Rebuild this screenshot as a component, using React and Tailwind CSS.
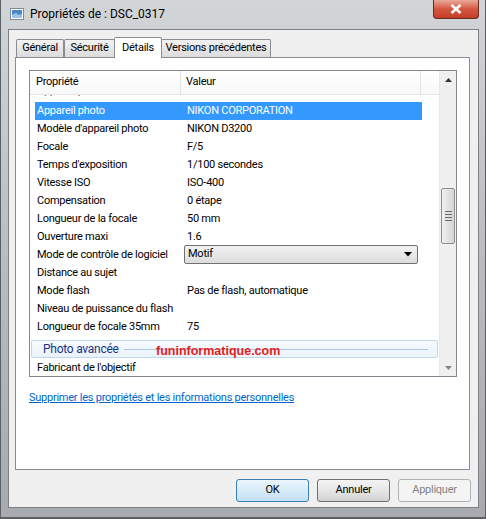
import React from 'react';

const rows = [
  ["Modèle d'appareil photo", 'NIKON D3200'],
  ['Focale', 'F/5'],
  ["Temps d'exposition", '1/100 secondes'],
  ['Vitesse ISO', 'ISO-400'],
  ['Compensation', '0 étape'],
  ['Longueur de la focale', '50 mm'],
  ['Ouverture maxi', '1.6'],
];

const rowsAfter = [
  ['Distance au sujet', ''],
  ['Mode flash', 'Pas de flash, automatique'],
  ['Niveau de puissance du flash', ''],
  ['Longueur de focale 35mm', '75'],
];

function Row({ name, value, selected }) {
  return (
    <div className={`flex h-[18px] items-center w-[387px] ${selected ? 'bg-[#3399ff] text-white' : 'text-black'}`}>
      <div className="w-[150px] pl-[2px] whitespace-nowrap">{name}</div>
      <div className="flex-1 pl-[2px] whitespace-nowrap">{value}</div>
    </div>
  );
}

function ImageIcon() {
  return (
    <svg width="14" height="12" viewBox="0 0 14 12">
      <rect x="0.5" y="0.5" width="13" height="11" fill="#fff" stroke="#7d8a99" />
      <rect x="2" y="2" width="10" height="8" fill="#4a86c5" />
      <path d="M2 7 L6 5 L9 7 L12 6 L12 10 L2 10 Z" fill="#9bc4e8" />
    </svg>
  );
}

function Tab({ label, active, w }) {
  if (active) {
    return (
      <div className={`h-[21px] ${w} -mx-[1px] bg-white border border-b-0 border-[#898c95] rounded-t-[2px] flex justify-center items-start pt-[2px] relative z-10 mb-[-1px] whitespace-nowrap`}>
        {label}
      </div>
    );
  }
  return (
    <div className={`h-[18px] ${w} bg-gradient-to-b from-[#f2f2f2] to-[#dcdcdc] border border-b-0 border-[#898c95] rounded-t-[2px] flex justify-center items-center whitespace-nowrap`}>
      {label}
    </div>
  );
}

function Button({ children, variant }) {
  const cls =
    variant === 'default'
      ? 'border-[#3c7fb1] bg-gradient-to-b from-[#eaf5fc] to-[#c4e0f4] text-black'
      : variant === 'disabled'
      ? 'border-[#adb2b5] bg-[#f4f4f4] text-[#838383]'
      : 'border-[#707070] bg-gradient-to-b from-[#f4f4f4] via-[#e6e6e6] to-[#d2d2d2] text-black';
  return (
    <div className={`w-[73px] h-[23px] border rounded-[3px] flex items-center justify-center ${cls}`}>
      {children}
    </div>
  );
}

export default function App() {
  return (
    <div className="w-[486px] h-[519px] bg-gradient-to-b from-[#d2d5d8] via-[#b9bdc1] to-[#a7abaf] border-l-[1px] border-r-[1px] border-b-[2px] border-[#5c6065] font-['Roboto',sans-serif] text-[11px] tracking-[-0.25px] text-black overflow-hidden flex flex-col">
      {/* title bar */}
      <div className="h-[29px] flex items-start shrink-0">
        <div className="flex items-center h-[28px] pl-[9px] gap-[6px]">
          <ImageIcon />
          <span className="text-[12px] tracking-normal text-black">Propriétés de : DSC_0317</span>
        </div>
        <div className="ml-auto mr-[6px] w-[46px] h-[19px] rounded-b-[4px] border border-t-0 border-[#6a2a22] bg-gradient-to-b from-[#e9a99b] via-[#d4563f] to-[#c23e27] flex items-center justify-center">
          <svg width="12" height="10" viewBox="0 0 12 10">
            <path d="M1.5 1 L10.5 9 M10.5 1 L1.5 9" stroke="#fff" strokeWidth="2.6" />
          </svg>
        </div>
      </div>

      {/* client area */}
      <div className="ml-[7px] mr-[6px] h-[479px] border border-[#7b8189] bg-[#f0f0f0] flex flex-col shrink-0">
        {/* tabs */}
        <div className="flex items-end pl-[7px] pt-[7px] h-[27px]">
          <Tab label="Général" w="w-[48px]" />
          <Tab label="Sécurité" w="w-[51px]" />
          <Tab label="Détails" w="w-[48px]" active />
          <Tab label="Versions précédentes" w="w-[110px]" />
        </div>

        {/* tab page */}
        <div className="ml-[6px] w-[455px] h-[413px] bg-white border border-[#898c95] flex flex-col">
          {/* list view */}
          <div className="mt-[12px] ml-[13px] w-[428px] h-[307px] border border-[#828790] flex">
            <div className="flex-1 flex flex-col overflow-hidden">
              {/* header */}
              <div className="h-[24px] flex items-stretch border-b border-[#e5e5e5] bg-gradient-to-b from-white to-[#f7f8f9] shrink-0">
                <div className="w-[151px] pl-[6px] border-r border-[#e5e5e5] flex items-center">Propriété</div>
                <div className="w-[240px] pl-[5px] border-r border-[#e5e5e5] flex items-center">Valeur</div>
                <div className="flex-1" />
              </div>
              {/* body */}
              <div className="flex-1 overflow-hidden pl-[5px] relative">
                <div className="h-[7px] overflow-hidden">
                  <div className="-mt-[13px] pl-[2px] h-[18px] flex items-center text-[#555]">Appareil photo</div>
                </div>
                <Row name="Appareil photo" value="NIKON CORPORATION" selected />
                {rows.map(([n, v]) => (
                  <Row key={n} name={n} value={v} />
                ))}
                <div className="flex h-[18px] items-center w-[387px]">
                  <div className="w-[150px] pl-[2px] whitespace-nowrap">Mode de contrôle de logiciel</div>
                  <div className="ml-[-1px] mt-[-1px] w-[234px] h-[19px] border border-[#707070] rounded-[2px] bg-gradient-to-b from-[#f2f2f2] to-[#dcdcdc] flex items-center pl-[3px] pr-[5px]">
                    <span className="flex-1">Motif</span>
                    <svg width="8" height="5" viewBox="0 0 8 5">
                      <path d="M0 0 L8 0 L4 4.5 Z" fill="#000" />
                    </svg>
                  </div>
                </div>
                {rowsAfter.map(([n, v]) => (
                  <Row key={n} name={n} value={v} />
                ))}
                {/* group header */}
                <div className="pt-[4px] pb-[1px] -ml-[4px] relative">
                  <div className="w-[407px] h-[18px] border border-[#c2d7ee] rounded-[2px] bg-gradient-to-b from-[#f7fbff] to-[#eaf2fb] flex items-center pl-[11px] gap-[5px]">
                    <span className="text-[#1e3287] text-[12px] whitespace-nowrap">Photo avancée</span>
                    <div className="flex-1 h-px bg-[#aec5e0] mr-[9px]" />
                  </div>
                  <span className="absolute left-[125px] top-[9px] text-[#e41d1d] font-['Liberation_Sans',sans-serif] font-bold text-[12.5px] tracking-normal leading-none">
                    funinformatique.com
                  </span>
                </div>
                <Row name="Fabricant de l'objectif" value="" />
              </div>
            </div>
            {/* scrollbar */}
            <div className="w-[17px] bg-[#f0f0f0] border-l border-[#e8e8e8] flex flex-col">
              <div className="h-[17px] flex items-center justify-center">
                <svg width="7" height="4" viewBox="0 0 7 4"><path d="M0 4 L7 4 L3.5 0 Z" fill="#333" /></svg>
              </div>
              <div className="h-[100px]" />
              <div className="mx-[1px] h-[56px] border border-[#8e8f8f] rounded-[2px] bg-gradient-to-r from-[#f0f0f0] via-[#e2e2e2] to-[#d5d5d5] flex flex-col items-center justify-center gap-[2px]">
                <div className="w-[7px] h-px bg-[#6a6a6a]" />
                <div className="w-[7px] h-px bg-[#6a6a6a]" />
                <div className="w-[7px] h-px bg-[#6a6a6a]" />
                <div className="w-[7px] h-px bg-[#6a6a6a]" />
              </div>
              <div className="flex-1" />
              <div className="h-[17px] flex items-center justify-center">
                <svg width="7" height="4" viewBox="0 0 7 4"><path d="M0 0 L7 0 L3.5 4 Z" fill="#888" /></svg>
              </div>
            </div>
          </div>

          {/* link */}
          <div className="mt-[13px] ml-[13px]">
            <span className="text-[#0066cc] underline">Supprimer les propriétés et les informations personnelles</span>
          </div>
        </div>

        {/* buttons */}
        <div className="flex justify-end gap-[8px] pr-[7px] mt-[9px]">
          <Button variant="default">OK</Button>
          <Button>Annuler</Button>
          <Button variant="disabled">Appliquer</Button>
        </div>
      </div>
    </div>
  );
}
